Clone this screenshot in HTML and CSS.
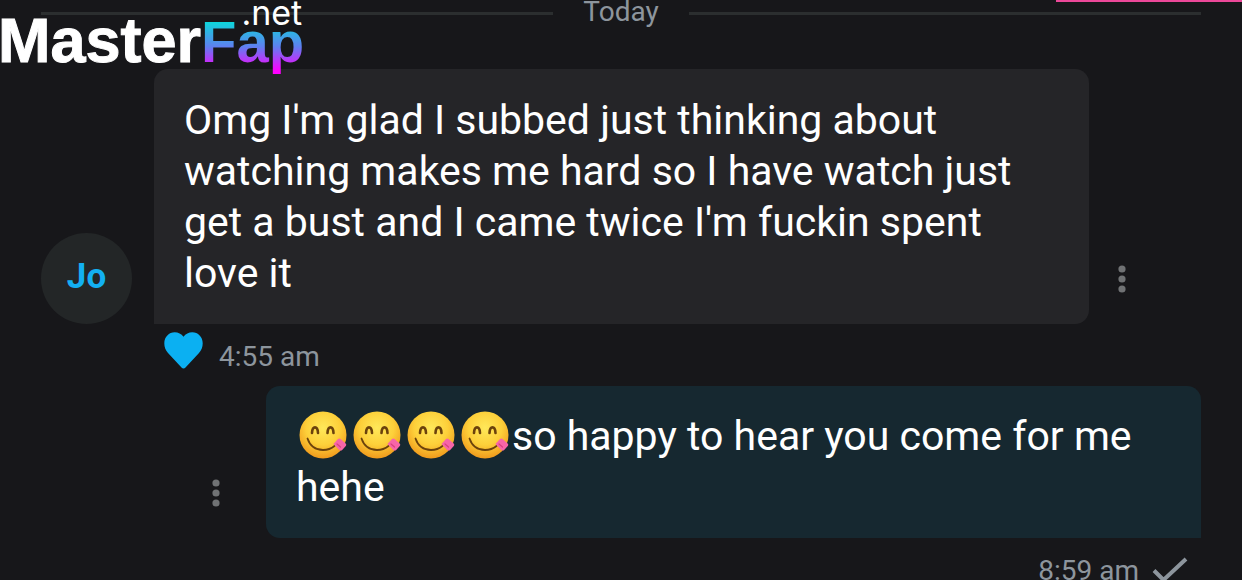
FILE: index.html
```
<!DOCTYPE html>
<html lang="en">
<head>
<meta charset="utf-8">
<meta name="viewport" content="width=device-width, initial-scale=1">
<title>Messages</title>
<link rel="stylesheet" href="styles.css">
</head>
<body>
<svg class="defs" aria-hidden="true">
  <defs>
    <radialGradient id="face" cx="50%" cy="35%" r="65%">
      <stop offset="0" stop-color="#ffe85a"/>
      <stop offset="0.55" stop-color="#fdd03a"/>
      <stop offset="1" stop-color="#f09a1c"/>
    </radialGradient>
    <symbol id="yum" viewBox="0 0 54 48">
      <circle cx="27" cy="24" r="23.5" fill="url(#face)"/>
      <path d="M16 22c.4-7.500 5.600-7.500 6 0M31.500 22c.4-7.500 5.600-7.500 6 0" fill="none" stroke="#6b420c" stroke-width="2.600" stroke-linecap="round"/>
      <path d="M11.500 27.500C14 35 20 39 27 39c4.500 0 8.500-1.500 11.500-4" fill="none" stroke="#6b420c" stroke-width="1.800" stroke-linecap="round"/>
      <path d="M37.500 33l4.500-5c.8-.8 1.800-.8 2.600 0l5 4.500c.8.800.8 1.600.2 2.400l-3.600 4c-.8.900-2 .9-3 .2z" fill="#f765a8"/>
      <path d="M41 33l3.500 3" stroke="#d8417f" stroke-width="1.200" stroke-linecap="round"/>
    </symbol>
    <symbol id="dots" viewBox="0 0 8 28">
      <circle cx="4" cy="4" r="3.600"/><circle cx="4" cy="14" r="3.600"/><circle cx="4" cy="24" r="3.600"/>
    </symbol>
  </defs>
</svg>
<div class="logo"><span class="logo-main">Master</span><span class="logo-accent">Fap</span><span class="logo-tld">.net</span></div>
<div class="progress"></div>
<main class="chat">
  <div class="day"><span class="day-label">Today</span></div>

  <article class="message">
    <div class="avatar">Jo</div>
    <p class="bubble">Omg I'm glad I subbed just thinking about watching makes me hard so I have watch just get a bust and I came twice I'm fuckin spent love it</p>
    <button class="menu" type="button" aria-label="Message options"><svg class="dots"><use href="#dots"/></svg></button>
  </article>
  <div class="meta">
    <button class="like" type="button" aria-label="Like"><svg class="heart" viewBox="0 0 39 37"><path d="M19.500 36.500c-.8 0-1.400-.4-2-1L4 21C1.500 18.300.3 15 .3 11.300.3 5 5 .3 10.700.3c3.500 0 6.700 1.700 8.800 4.500C21.600 2 24.800.3 28.300.3 34 .3 38.700 5 38.700 11.300c0 3.700-1.200 7-3.700 9.700L21.500 35.500c-.6.600-1.200 1-2 1z" fill="#0bb0f2"/></svg></button>
    <time>4:55 am</time>
  </div>

  <article class="message message-own">
    <button class="menu" type="button" aria-label="Message options"><svg class="dots"><use href="#dots"/></svg></button>
    <p class="bubble bubble-own"><svg class="emoji"><use href="#yum"/></svg><svg class="emoji"><use href="#yum"/></svg><svg class="emoji"><use href="#yum"/></svg><svg class="emoji"><use href="#yum"/></svg>so happy to hear you come for me hehe</p>
  </article>
  <div class="meta meta-own">
    <time>8:59 am</time>
    <svg class="check" viewBox="0 0 36 26"><path d="M2 13.500l9.500 9.500L34 2" fill="none" stroke="#8d959d" stroke-width="4"/></svg>
  </div>
</main>
</body>
</html>
```
FILE: styles.css
```
* { box-sizing: border-box; }

body {
  margin: 0;
  height: 100vh;
  overflow: hidden;
  position: relative;
  background: #17171a;
  color: #fff;
  font-family: Roboto, "Noto Sans", sans-serif;
}

button {
  padding: 0;
  border: 0;
  background: none;
  cursor: pointer;
}

svg { display: block; }

.defs {
  position: absolute;
  width: 0;
  height: 0;
}

.logo {
  position: absolute;
  top: 0;
  left: 0;
  display: flex;
  align-items: baseline;
  font-family: "Liberation Sans", Arial, sans-serif;
  font-weight: 700;
  line-height: 80px;
}

.logo-main {
  margin-left: -2px;
  font-size: 63px;
  -webkit-text-stroke: 1px #fff;
}

.logo-accent {
  font-size: 58px;
  background: linear-gradient(#00e5d8 20%, #5f7ff0 56%, #f0f 86%);
  -webkit-background-clip: text;
  background-clip: text;
  color: transparent;
}

.logo-tld {
  position: absolute;
  top: 0;
  right: 2px;
  font-family: Inter, sans-serif;
  font-size: 34px;
  font-weight: 400;
  line-height: 26px;
}

.progress {
  position: absolute;
  top: 0;
  right: 0;
  width: 15%;
  height: 2px;
  background: #ec4899;
}

.chat { padding: 0 41px; }

.day {
  display: flex;
  align-items: center;
  gap: 30px;
  height: 26px;
  margin-bottom: 43px;
  color: #8d959d;
  font-size: 28px;
}

.day::before,
.day::after {
  content: "";
  flex: 1;
  height: 3px;
  background: #2b2e2f;
}

.day-label { line-height: 24px; padding-bottom: 2px; }

.message {
  display: flex;
  align-items: flex-end;
  padding-right: 46px;
}

.message-own { padding: 0 0 0 142px; }

.avatar {
  display: grid;
  place-items: center;
  flex: none;
  width: 91px;
  height: 91px;
  margin-right: 22px;
  padding-bottom: 4px;
  border-radius: 50%;
  background: #232627;
  color: #13b0f2;
  font-size: 35px;
  font-weight: 700;
}

.bubble {
  flex: 1;
  margin: 0;
  padding: 26px 30px 25px;
  border-radius: 14px 14px 14px 0;
  background: #252528;
  font-size: 41px;
  line-height: 51px;
}

.bubble-own {
  padding: 25px 30px;
  border-radius: 14px 14px 0 14px;
  background: #162830;
}

.emoji {
  display: inline-block;
  width: 54px;
  height: 48px;
  margin: -4px 0;
  vertical-align: -5px;
}

.menu {
  display: grid;
  place-items: center;
  flex: none;
  width: 66px;
  height: 90px;
}

.message-own .menu { margin-right: 17px; }

.dots {
  width: 8px;
  height: 28px;
  fill: #707274;
}

.meta {
  display: flex;
  gap: 16px;
  height: 62px;
  padding: 8px 0 0 123px;
  color: #8d959d;
  font-size: 28px;
  line-height: 50px;
}

.like { height: 37px; }

.heart {
  width: 39px;
  height: 37px;
}

.meta-own {
  justify-content: flex-end;
  gap: 13px;
  padding: 8px 13px 0 0;
}

.check {
  width: 36px;
  height: 26px;
  margin-top: 11px;
}
```
